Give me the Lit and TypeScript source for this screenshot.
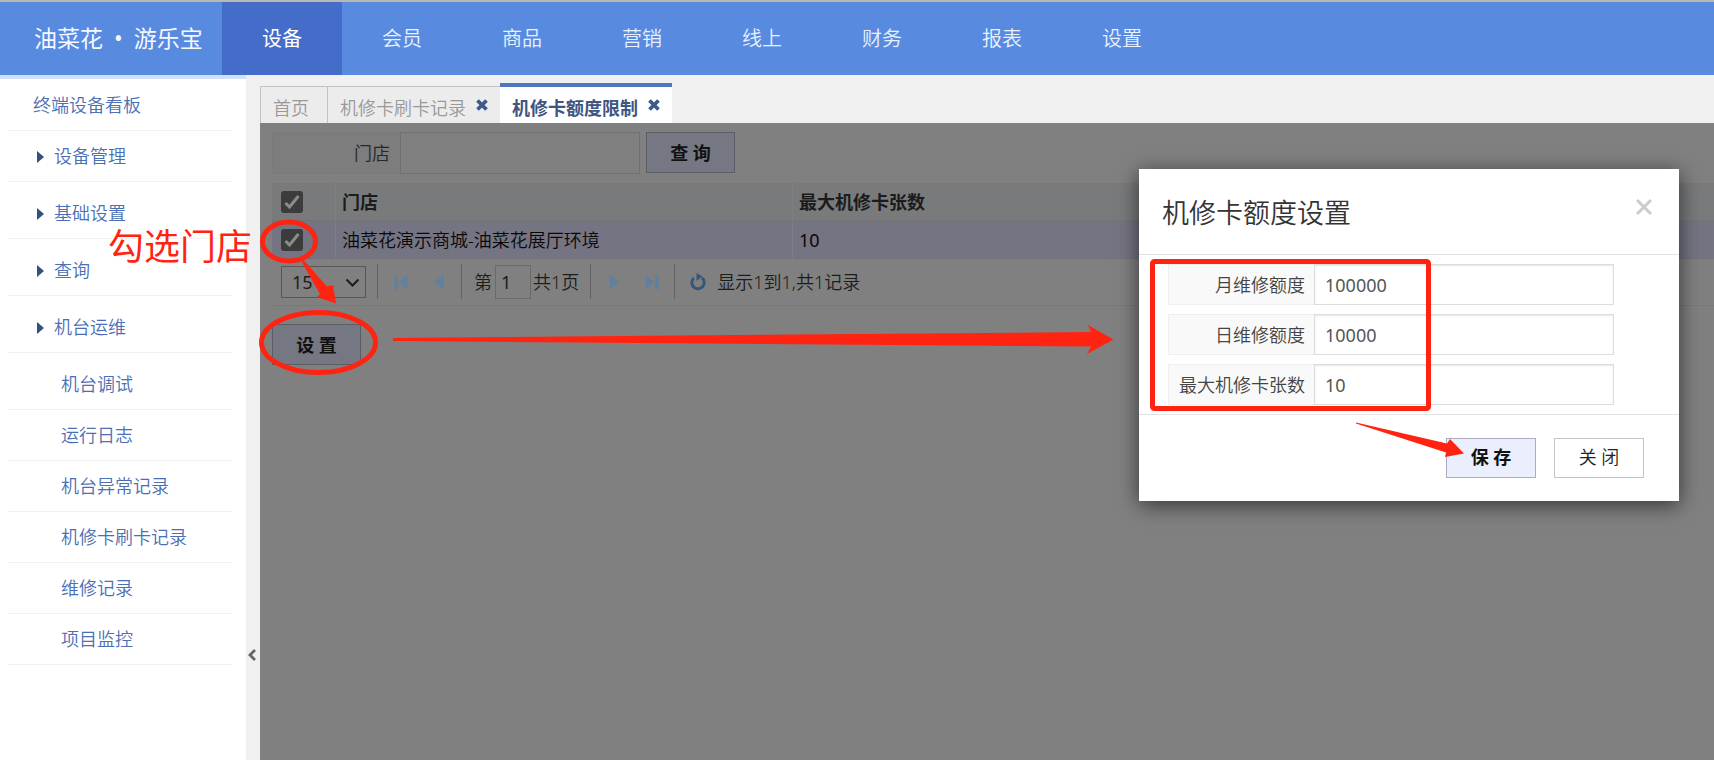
import { LitElement, html, css } from "lit";
import { customElement, property, state } from "lit/decorators.js";

const FONT = css`"Noto Sans", "Noto Sans CJK SC", sans-serif`;

/** Top bar with the product name and the module switcher. */
@customElement("top-bar")
class TopBar extends LitElement {
  @property({ type: Number }) active = 0;
  private modules = ["设备", "会员", "商品", "营销", "线上", "财务", "报表", "设置"];

  static styles = css`
    :host { display: block; border-top: 2px solid #b9b9b4; background: #588be0; }
    .bar { display: flex; height: 73px; }
    .logo {
      width: 188px; padding: 0 0 2px 34px; box-sizing: content-box; display: flex; align-items: center; gap: 11px;
      color: #f4f8ff; font: 400 23px/30px ${FONT};
      white-space: nowrap;
    }
    nav { display: flex; }
    a {
      width: 120px; display: flex; align-items: center; justify-content: center;
      color: #e8f1ff; text-decoration: none; font: 350 20px/28px ${FONT};
    }
    a.on { background: #436dc8; color: #fff; font-weight: 400; }
  `;

  render() {
    return html`<header class="bar">
      <div class="logo"><span>油菜花</span><span>•</span><span>游乐宝</span></div>
      <nav>
        ${this.modules.map((m, i) => html`<a href="#" class=${i === this.active ? "on" : ""}>${m}</a>`)}
      </nav>
    </header>`;
  }
}

type Item = { text: string; kind: "top" | "group" | "leaf"; tall?: boolean };

/** Left navigation tree. */
@customElement("side-menu")
class SideMenu extends LitElement {
  private items: Item[] = [
    { text: "终端设备看板", kind: "top" },
    { text: "设备管理", kind: "group" },
    { text: "基础设置", kind: "group", tall: true },
    { text: "查询", kind: "group", tall: true },
    { text: "机台运维", kind: "group", tall: true },
    { text: "机台调试", kind: "leaf", tall: true },
    { text: "运行日志", kind: "leaf" },
    { text: "机台异常记录", kind: "leaf" },
    { text: "机修卡刷卡记录", kind: "leaf" },
    { text: "维修记录", kind: "leaf" },
    { text: "项目监控", kind: "leaf" },
  ];

  static styles = css`
    :host { display: block; background: #fff; border-top: 4px solid #cfe2fa; }
    ul { list-style: none; margin: 0; padding: 1px 14px 0 8px; }
    li { border-bottom: 1px solid #f2f2f2; }
    li.tall { padding-top: 6px; }
    a {
      display: flex; align-items: center; height: 50px; text-decoration: none;
      color: #4a6fb5; font: 350 18px/26px ${FONT};
    }
    .top { padding-left: 25px; }
    .group { padding-left: 29px; gap: 10px; }
    .leaf { padding-left: 53px; }
    svg { width: 7px; height: 12px; margin-top: 2px; }
  `;

  render() {
    return html`<ul>
      ${this.items.map(
        (it) => html`<li class=${it.tall ? "tall" : ""}>
          <a href="#" class=${it.kind}>
            ${it.kind === "group"
              ? html`<svg viewBox="0 0 7 12"><path d="M0 0L7 6L0 12Z" fill="#34507c" /></svg>`
              : ""}${it.text}</a>
        </li>`,
      )}
    </ul>`;
  }
}

/** Row of open page tabs. */
@customElement("page-tabs")
class PageTabs extends LitElement {
  @property({ type: Number }) active = 2;
  private tabs = ["首页", "机修卡刷卡记录", "机修卡额度限制"];

  static styles = css`
    :host { display: block; }
    .tabs { display: flex; align-items: flex-end; height: 48px; box-sizing: border-box; }
    .tab {
      display: flex; align-items: center; gap: 10px; height: 37px; padding: 0 12px;
      border: 1px solid #c2c2c2; border-bottom: 0; border-right-width: 0; background: #ececec;
      box-sizing: border-box;
    }
    .tab:first-child { padding-right: 18px; }
    .tab.on { height: 40px; border: 0; border-top: 4px solid #4f77bd; background: #fff; }
    .name {
      border: 0; background: none; padding: 5px 0 0; color: #999; white-space: nowrap;
      font: 350 18px/26px ${FONT};
    }
    .on .name { color: #40557f; font-weight: 700; }
    .close { border: 0; background: none; padding: 0; height: 12px; display: flex; }
    svg { width: 12px; height: 12px; }
  `;

  render() {
    return html`<div class="tabs">
      ${this.tabs.map(
        (t, i) => html`<div class="tab ${i === this.active ? "on" : ""}">
          <button class="name">${t}</button>
          ${i > 0
            ? html`<button class="close" aria-label="关闭${t}">
                <svg viewBox="0 0 12 12"><path d="M1.500 1.500L10.500 10.500M10.500 1.500L1.500 10.500" stroke="#3d5a8c" stroke-width="3.800" /></svg>
              </button>`
            : ""}
        </div>`,
      )}
    </div>`;
  }
}

/** Search form, store table, pager and the action button. */
@customElement("store-panel")
class StorePanel extends LitElement {
  @state() private rows = [{ store: "油菜花演示商城-油菜花展厅环境", max: "10" }];

  static styles = css`
    :host { display: block; padding: 9px 0 0 12px; color: #1c1c1c; font: 350 18px/26px ${FONT}; }
    .search { display: flex; align-items: flex-start; }
    .search label {
      width: 128px; height: 42px; box-sizing: border-box; padding: 7px 10px 0 0; text-align: right;
      background: #7d7d7d; border: 1px solid #7a7a7a; border-right: 0; color: #262626;
    }
    .search input {
      width: 240px; height: 42px; box-sizing: border-box; margin-right: 6px; padding: 0 10px;
      background: #808080; border: 1px solid #707070; font: inherit;
    }
    .btn {
      display: block; width: 89px; height: 41px; padding: 0; border: 1px solid #5b5d64; background: #757883;
      color: #111; font: 700 18px/26px ${FONT};
    }
    table {
      width: 100%; margin-top: 9px; border-collapse: collapse; table-layout: fixed; text-align: left;
    }
    th, td { height: 37px; padding: 0 0 0 6px; border-bottom: 1px solid #71717a; border-left: 1px solid #7f7f84; font-weight: 350; }
    th { background: #787a7b; font-weight: 700; border-bottom-color: #747474; }
    td { background: #757482; color: #080808; }
    th:first-child, td:first-child { width: 54px; padding-left: 9px; border-left: 0; }
    .c-store { width: 450px; }
    .num { font-weight: 400; }
    .box {
      appearance: none; display: block; width: 22px; height: 22px; margin: 0; border-radius: 3px; background: #3c3c3c;
      background-image: url("data:image/svg+xml,%3Csvg xmlns='http://www.w3.org/2000/svg' viewBox='0 0 22 22'%3E%3Cpath d='M4.500 12L8.500 16L17.500 5' fill='none' stroke='%238c8c8c' stroke-width='3'/%3E%3C/svg%3E");
    }
    .pager { display: flex; align-items: center; height: 45px; padding: 0 0 1px 9px; border-bottom: 1px solid #787878; }
    .size { position: relative; display: flex; margin-right: 8px; }
    select {
      appearance: none; width: 85px; height: 32px; padding: 0 10px; border: 1px solid #585858; border-radius: 0;
      background: #808080; color: #1c1c1c; font: inherit; font-weight: 400;
    }
    .caret { position: absolute; right: 6px; top: 12px; width: 15px; height: 9px; pointer-events: none; }
    .sep { width: 1px; height: 35px; background: #636363; margin: 0 4px 0 3px; }
    .ic { width: 38px; height: 20px; padding: 0; border: 0; background: none; display: flex; align-items: center; justify-content: center; }
    .ic svg { width: 16px; height: 16px; }
    .ic.re svg { width: 18px; height: 18px; }
    .jump { display: flex; align-items: center; padding: 0 8px; }
    .page {
      width: 36px; height: 34px; box-sizing: border-box; margin: 0 2px 0 3px; padding: 0 5px;
      border: 1px solid #6a6a6a; background: #808080; color: #1c1c1c; font: inherit; font-weight: 400;
    }
    .act { margin-top: 18px; }
  `;

  private icon(label: string, d: string) {
    return html`<button class="ic" aria-label=${label}>
      <svg viewBox="0 0 16 16"><path d=${d} fill="#5f809f" /></svg>
    </button>`;
  }

  render() {
    return html`
      <form class="search" @submit=${(e: Event) => e.preventDefault()}>
        <label for="store">门店</label><input id="store" type="text" />
        <button class="btn">查 询</button>
      </form>
      <table>
        <thead>
          <tr>
            <th><input class="box" type="checkbox" checked aria-label="全选" /></th>
            <th class="c-store">门店</th>
            <th>最大机修卡张数</th>
          </tr>
        </thead>
        <tbody>
          ${this.rows.map(
            (r) => html`<tr>
              <td><input class="box" type="checkbox" checked aria-label=${r.store} /></td>
              <td>${r.store}</td>
              <td class="num">${r.max}</td>
            </tr>`,
          )}
        </tbody>
      </table>
      <div class="pager">
        <div class="size">
          <select aria-label="每页条数"><option>15</option></select>
          <svg class="caret" viewBox="0 0 15 9"><path d="M1.500 1.500L7.500 7.500L13.500 1.500" fill="none" stroke="#1c1c1c" stroke-width="2" /></svg>
        </div>
        <span class="sep"></span>
        ${this.icon("第一页", "M1.500 0.500H5V15.500H1.500ZM14.500 0.500V15.500L5.500 8Z")}
        ${this.icon("上一页", "M13 0.500V15.500L3 8Z")}
        <span class="sep"></span>
        <div class="jump">
          <label for="page">第</label><input class="page" id="page" type="text" value="1" /><span>共1页</span>
        </div>
        <span class="sep"></span>
        ${this.icon("下一页", "M3.500 0.500V15.500L13.500 8Z")}
        ${this.icon("最后一页", "M11 0.500H14.500V15.500H11ZM1.500 0.500V15.500L10.500 8Z")}
        <span class="sep"></span>
        <button class="ic re" aria-label="刷新">
          <svg viewBox="0 0 18 18">
            <path d="M4.800 5A6.200 6.200 0 1 0 13 4.800" fill="none" stroke="#365778" stroke-width="3" />
            <path d="M7.500 0L13.500 3.500L7.500 8Z" fill="#365778" />
          </svg>
        </button>
        <span>显示1到1,共1记录</span>
      </div>
      <button class="btn act">设 置</button>
    `;
  }
}

/** Modal dialog with the repair card limits. */
@customElement("limit-dialog")
class LimitDialog extends LitElement {
  @state() private fields = [
    { id: "month", label: "月维修额度", value: "100000" },
    { id: "day", label: "日维修额度", value: "10000" },
    { id: "cards", label: "最大机修卡张数", value: "10" },
  ];

  static styles = css`
    :host { display: block; width: 540px; background: #fff; box-shadow: 0 4px 20px rgba(0, 0, 0, 0.6); font: 350 18px/26px ${FONT}; }
    .head { display: flex; justify-content: space-between; height: 86px; box-sizing: border-box; padding: 24px 26px 0 23px; border-bottom: 1px solid #e2e2e2; }
    h2 { margin: 0; color: #333; font: 350 27px/40px ${FONT}; }
    .x { align-self: flex-start; margin-top: 5px; width: 18px; height: 18px; padding: 0; border: 0; background: none; display: flex; }
    .body { display: grid; gap: 9px; padding: 9px 65px 9px 29px; border-bottom: 1px solid #e2e2e2; }
    .row { display: flex; height: 41px; }
    label {
      width: 146px; box-sizing: border-box; padding: 7px 9px 0 0; text-align: right; color: #444;
      background: #f9f9f9; border: 1px solid #efefef; border-right: 0;
    }
    input {
      flex: 1; min-width: 0; box-sizing: border-box; padding: 0 10px; border: 1px solid #ddd; background: #fff;
      box-shadow: inset 0 1px 2px #e6e6e6; color: #555; font: inherit; font-weight: 400;
    }
    .foot { display: flex; justify-content: flex-end; gap: 18px; padding: 23px 35px 23px 0; }
    .btn { width: 90px; height: 40px; padding: 0 0 2px; border: 1px solid #c4c4c4; background: #fff; color: #222; font: 350 18px/26px ${FONT}; }
    .save { border-color: #a9adbd; background: #ebeefd; color: #111; font-weight: 700; }
  `;

  render() {
    return html`<div class="head">
        <h2>机修卡额度设置</h2>
        <button class="x" aria-label="关闭窗口">
          <svg viewBox="0 0 18 18" width="18" height="18"><path d="M2 2L16 16M16 2L2 16" stroke="#ccc" stroke-width="3" /></svg>
        </button>
      </div>
      <div class="body">
        ${this.fields.map(
          (f) => html`<div class="row">
            <label for=${f.id}>${f.label}</label><input id=${f.id} type="text" .value=${f.value} />
          </div>`,
        )}
      </div>
      <div class="foot"><button class="btn save">保 存</button><button class="btn">关 闭</button></div>`;
  }
}

@customElement("app-root")
class AppRoot extends LitElement {
  static styles = css`
    :host { display: flex; flex-direction: column; min-height: 100vh; position: relative; overflow: hidden; background: #f0f0f0; }
    .main { flex: 1; display: flex; }
    side-menu { width: 246px; flex: none; }
    .gutter { width: 14px; flex: none; display: flex; align-items: flex-end; justify-content: center; }
    .fold { border: 0; background: none; padding: 0; height: 12px; margin-bottom: 99px; display: flex; }
    .work { flex: 1; min-width: 0; display: flex; flex-direction: column; }
    store-panel { flex: 1; background: #808080; }
    limit-dialog { position: absolute; right: 35px; top: 169px; }
    .marks { position: absolute; left: 0; top: 0; width: 1714px; height: 760px; pointer-events: none; }
    .hint { position: absolute; left: 108px; top: 223px; color: #ff2412; font: 400 36px/48px ${FONT}; }
  `;

  render() {
    return html`
      <top-bar></top-bar>
      <div class="main">
        <side-menu></side-menu>
        <div class="gutter">
          <button class="fold" aria-label="收起菜单">
            <svg width="10" height="12" viewBox="0 0 10 12"><path d="M7 1L2 6L7 11" fill="none" stroke="#666" stroke-width="2.800" /></svg>
          </button>
        </div>
        <div class="work">
          <page-tabs></page-tabs>
          <store-panel></store-panel>
        </div>
      </div>
      <limit-dialog></limit-dialog>
      <svg class="marks" viewBox="0 0 1714 760" fill="none" stroke="#ff2412" stroke-width="5">
        <ellipse cx="289" cy="241.500" rx="26.500" ry="19.500" />
        <ellipse cx="318.500" cy="342.500" rx="57" ry="30" />
        <rect x="1152.500" y="261.500" width="276" height="147" rx="2" />
        <g fill="#ff2412" stroke="none">
          <path d="M301.500 261.500L304 260.500L327 286.500L333 285L336 303.500L317 297L320 294Z" />
          <path d="M393 338L1091 332L1088 325L1113.500 339.500L1087 354L1091 346.500L393 341Z" />
          <path d="M1356 422.500L1447 443.500L1450 439L1464 453.500L1445 457L1446 452.500L1356 423.500Z" />
        </g>
      </svg>
      <div class="hint">勾选门店</div>
    `;
  }
}
